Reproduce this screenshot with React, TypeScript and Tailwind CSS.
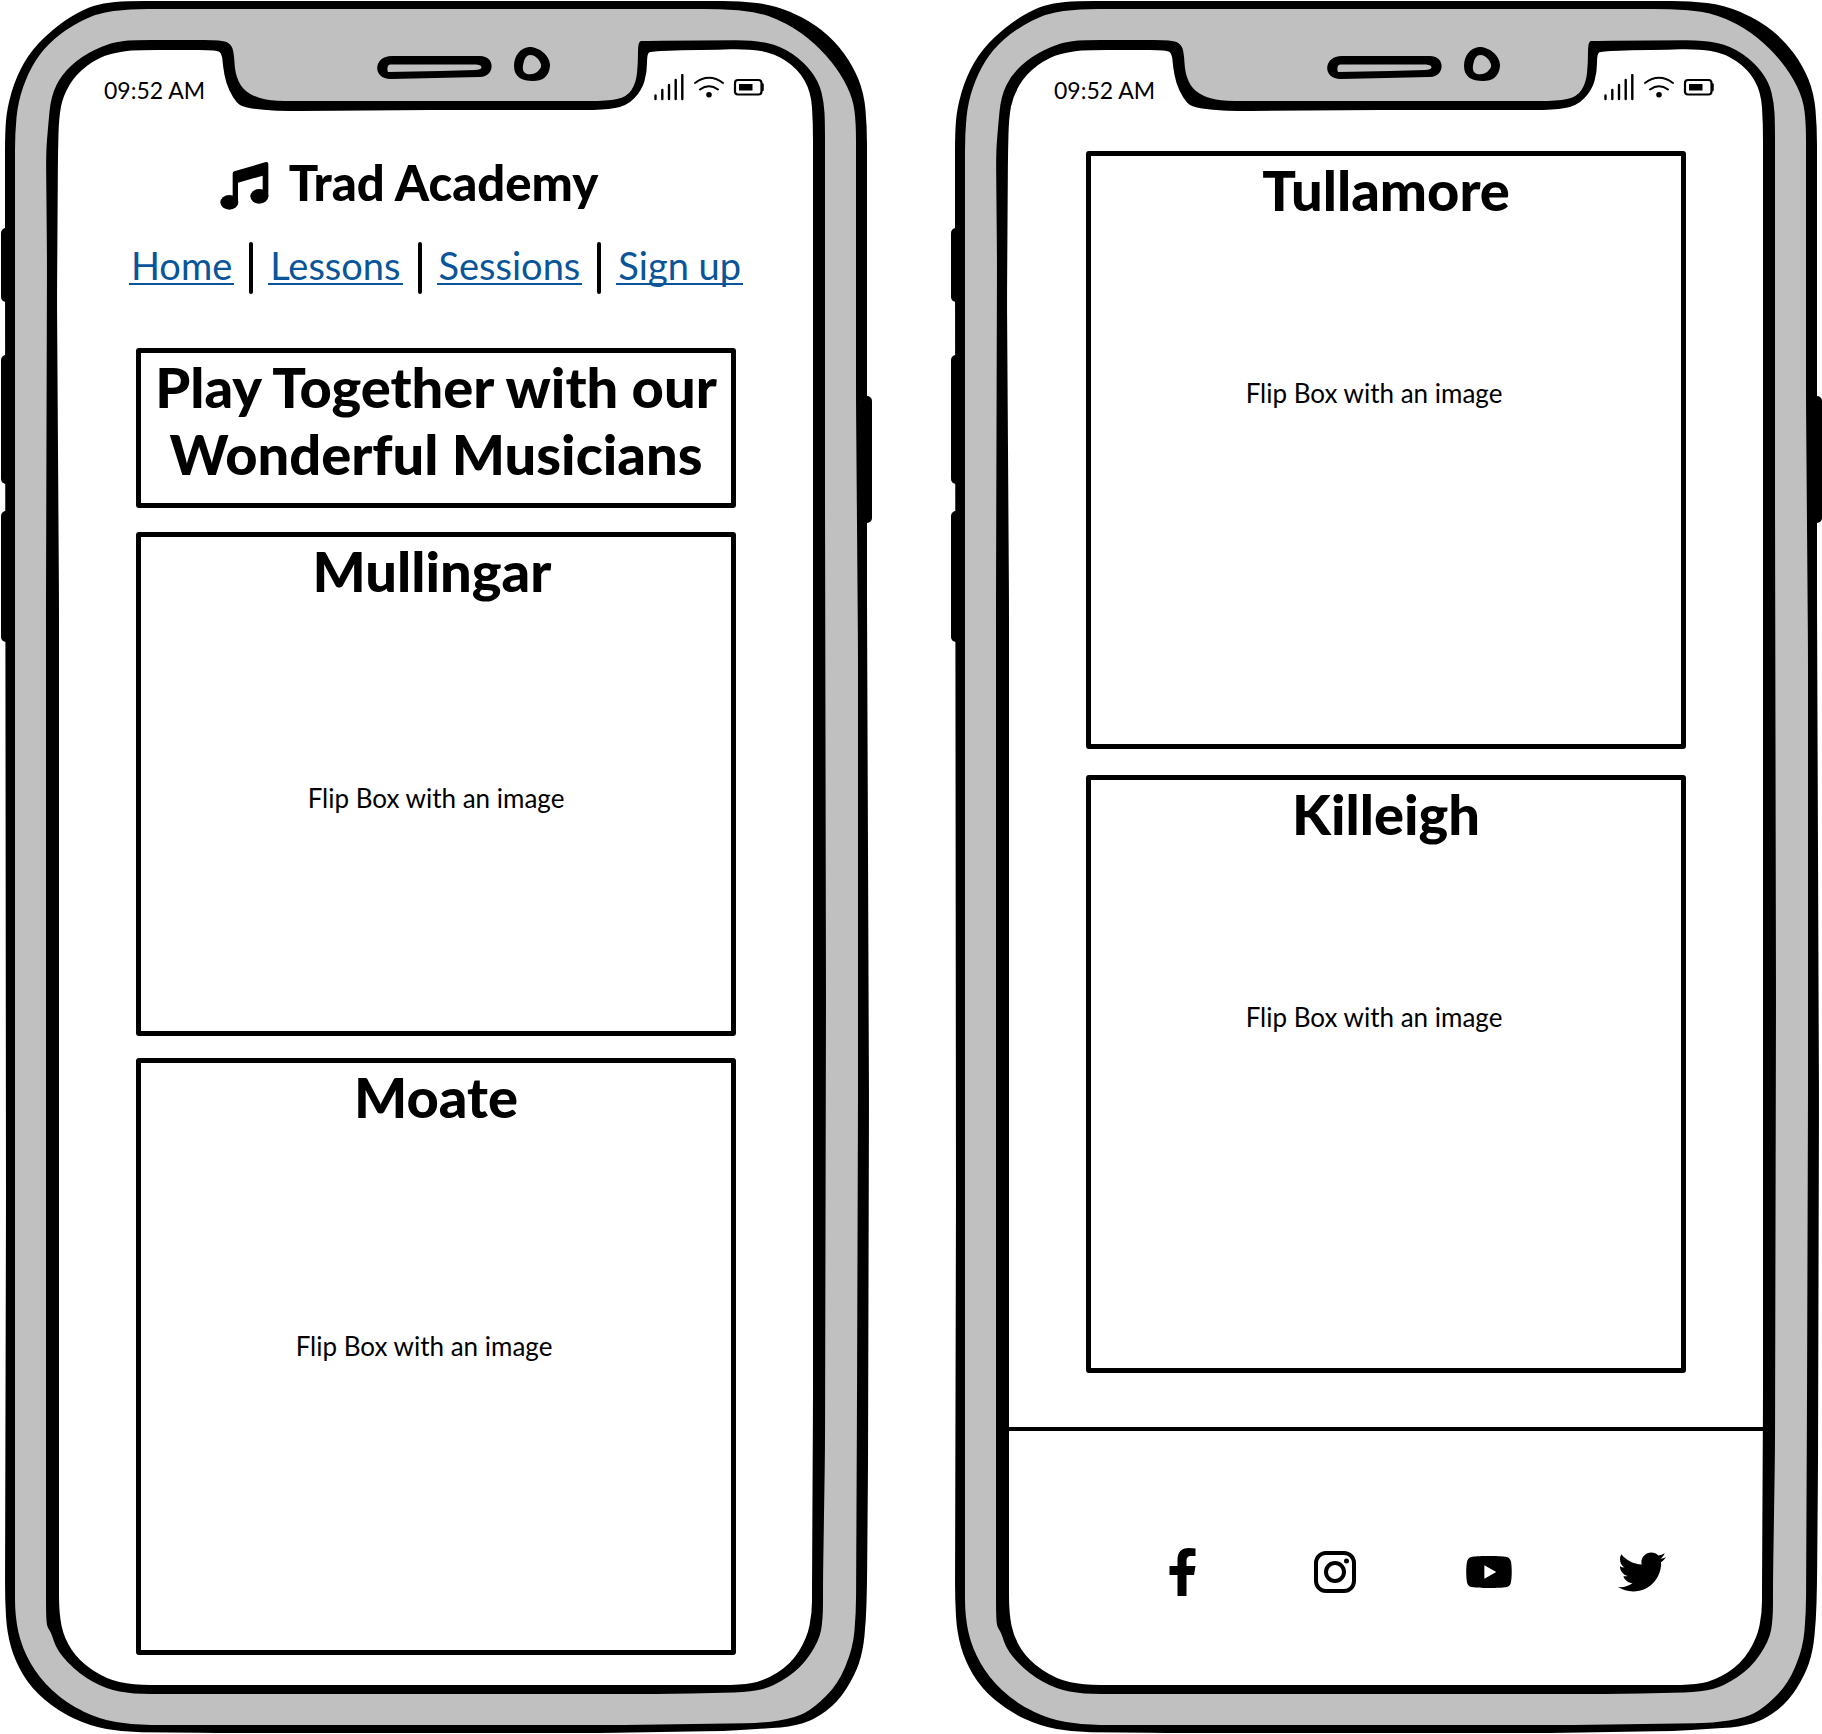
import type { ReactNode } from "react";
import { FaTwitter, FaYoutube } from "react-icons/fa";

type Point = [number, number];

// Point on the edge a-b, at most 18 units away from a and never past the middle.
function near(a: Point, b: Point): string {
  const length = Math.hypot(b[0] - a[0], b[1] - a[1]);
  const t = Math.min(0.5, 18 / length);
  return `${a[0] + (b[0] - a[0]) * t} ${a[1] + (b[1] - a[1]) * t}`;
}

// Closed outline whose corners are rounded off.
function outline(points: Point[]): string {
  const n = points.length;
  const parts = points.map((p, i) => {
    const previous = points[(i + n - 1) % n];
    const next = points[(i + 1) % n];
    return `${i === 0 ? "M" : "L"}${near(p, previous)}Q${p[0]} ${p[1]} ${near(p, next)}`;
  });
  return parts.join("") + "Z";
}

const OUTER: Point[] = [
  [5, 250], [5, 133], [7, 108], [16, 77], [32, 49], [59, 24], [84, 9], [103, 3], [127, 1], [400, 1], [740, 1],
  [774, 5], [809, 20], [835, 41], [853, 66], [864, 93], [867, 127], [867, 600], [869, 1100], [868, 1467], [867, 1587],
  [866, 1620], [863, 1651], [855, 1675], [838, 1702], [814, 1720], [790, 1727], [723, 1731], [598, 1733], [217, 1733],
  [123, 1732], [90, 1726], [58, 1711], [31, 1688], [15, 1661], [7, 1633], [5, 1600], [6, 1200],
];

const BODY: Point[] = [
  [15, 300], [15, 133], [18, 102], [28, 73], [43, 49], [66, 29], [97, 13], [130, 9], [400, 9], [720, 9],
  [760, 12], [794, 27], [821, 49], [841, 74], [853, 99], [856, 123], [856, 400], [858, 650], [858, 1100], [857, 1400],
  [856, 1613], [853, 1648], [838, 1684], [814, 1708], [795, 1718], [763, 1723], [623, 1725], [133, 1725],
  [99, 1719], [66, 1703], [39, 1678], [22, 1648], [15, 1617], [15, 1400],
];

const BEZEL: Point[] = [
  [47, 260], [46, 153], [48, 127], [51, 96], [62, 74], [82, 56], [107, 44], [123, 41], [133, 40], [180, 40], [222, 40],
  [231, 44], [234, 53], [235, 73], [242, 89], [257, 98], [275, 101], [440, 101], [607, 101], [627, 97], [636, 83],
  [638, 63], [638, 41], [644, 41], [753, 40], [781, 46], [804, 62], [819, 82], [824, 103], [825, 123], [825, 500],
  [826, 1000], [825, 1450], [823, 1580], [823, 1620], [819, 1641], [801, 1668], [774, 1686], [752, 1692], [673, 1694],
  [133, 1694], [106, 1689], [79, 1674], [57, 1651], [51, 1632], [47, 1627], [46, 1615], [46, 1400], [46, 600],
];

const SCREEN: Point[] = [
  [57, 300], [58, 150], [59, 117], [63, 96], [76, 74], [99, 57], [123, 51], [140, 50], [180, 50], [217, 50],
  [222, 54], [223, 67], [226, 83], [233, 98], [241, 107], [263, 110], [283, 111], [450, 110], [603, 110], [627, 106],
  [642, 90], [647, 72], [647, 54], [651, 51], [700, 50], [748, 49], [774, 53], [798, 69], [811, 92], [813, 123],
  [813, 600], [813, 1400], [812, 1590], [812, 1613], [807, 1638], [791, 1664], [764, 1681], [740, 1685], [133, 1685],
  [106, 1679], [79, 1661], [64, 1638], [59, 1613], [59, 1400], [59, 600],
];

function PhoneFrame() {
  return (
    <svg
      aria-hidden="true"
      className="absolute inset-0 h-full w-full"
      viewBox="0 0 872 1734"
      preserveAspectRatio="none"
    >
      <rect x="1" y="228" width="12" height="74" rx="5" />
      <rect x="1" y="355" width="12" height="129" rx="5" />
      <rect x="1" y="511" width="12" height="131" rx="5" />
      <rect x="857" y="396" width="15" height="127" rx="5" />
      <path d={outline(OUTER)} />
      <path d={outline(BODY)} fill="#c0c0c0" />
      <path d={outline(BEZEL)} />
      <path d={outline(SCREEN)} fill="#fff" />
      <path d="M392 56H480C496 56 495 77 480 77L391 79C372 79 373 56 392 56Z" />
      <path d="M390 64.500H476C484 65 483 70 475 70L440 71 388 72C387 70 387 65 390 64.500Z" fill="#c0c0c0" />
      <path d="M529 47C539 47 550 55 550 66C549 77 542 81 533 81C522 81 514 77 514 66C514 56 520 48 529 47Z" />
      <path d="M530 55C534 55 536 57 538 59C542 64 542 67 539 70C536 74 531 75 527 74C521 72 523 65 524 61C525 58 527 55 530 55Z" fill="#c0c0c0" />
    </svg>
  );
}

function StatusIcons() {
  return (
    <svg aria-hidden="true" className="h-7 w-[112px]" viewBox="653 74 112 28" fill="none" stroke="#000">
      <path
        d="M655.500 95.500V99M662.300 90V99M669 85V99M675.700 80V99M682.300 75V99"
        strokeWidth="2.400"
        strokeLinecap="round"
      />
      <path d="M695 83Q709 72.500 723 83M700 89.500Q709 83 718 89.500" strokeWidth="2" strokeLinecap="round" />
      <circle cx="709" cy="94.700" r="2.800" fill="#000" stroke="none" />
      <rect x="735" y="80" width="26.500" height="14.500" rx="3" strokeWidth="2.200" />
      <rect x="739" y="84" width="13.500" height="6.500" fill="#000" stroke="none" />
      <path d="M762.500 84.500V90" strokeWidth="2.500" strokeLinecap="round" />
    </svg>
  );
}

function StatusBar() {
  return (
    <div className="flex h-7 items-center justify-between">
      <span className="pt-1 text-[23px] leading-6">09:52 AM</span>
      <StatusIcons />
    </div>
  );
}

function MusicIcon() {
  return (
    <svg aria-hidden="true" className="mt-2 h-12 w-[49px]" viewBox="660 486 145 144">
      <path d="M697 520Q697 516 702 514L794 487Q804 484 804 492V590H787V527L713 548V608H697Z" />
      <ellipse cx="687" cy="607" rx="27" ry="22" />
      <ellipse cx="777" cy="589" rx="27" ry="22" />
    </svg>
  );
}

function FacebookIcon() {
  return (
    <svg aria-hidden="true" className="h-12 w-[27px]" viewBox="0 0 26 48">
      <path d="M8 48V27H0V18H8V12C8 4 12 0 19 0Q23 0 26 .5V8H22C18 8 17 10 17 13V18H26L24.500 27H17V48Z" />
    </svg>
  );
}

function InstagramIcon() {
  return (
    <svg aria-hidden="true" className="size-[42px]" viewBox="0 0 42 42" fill="none" stroke="#000">
      <rect x="2" y="2" width="38" height="38" rx="10" strokeWidth="4" />
      <circle cx="21" cy="21" r="9" strokeWidth="4" />
      <circle cx="32.500" cy="10" r="2.500" fill="#000" stroke="none" />
    </svg>
  );
}

function Phone({ children }: { children: ReactNode }) {
  return (
    <section className="relative pt-[74px]">
      <PhoneFrame />
      <div className="relative flex flex-col">
        <div className="pr-[107px] pl-[104px]">
          <StatusBar />
        </div>
        {children}
      </div>
    </section>
  );
}

interface FlipCardProps {
  title: string;
  className: string;
  heading?: string;
  caption: string;
}

function FlipCard({ title, className, heading = "", caption }: FlipCardProps) {
  return (
    <article className={`rounded-[3px] border-[5px] border-black text-center ${className}`}>
      <h2 className={`text-[56px] leading-[67px] font-black ${heading}`}>{title}</h2>
      <p className={`text-[26px] leading-8 ${caption}`}>Flip Box with an image</p>
    </article>
  );
}

const LINKS = ["Home", "Lessons", "Sessions", "Sign up"];

const SOCIALS = [
  { name: "Facebook", icon: <FacebookIcon /> },
  { name: "Instagram", icon: <InstagramIcon /> },
  { name: "YouTube", icon: <FaYoutube className="size-12" /> },
  { name: "Twitter", icon: <FaTwitter className="size-12" /> },
];

export default function App() {
  return (
    <main className="grid grid-cols-2 gap-[78px] bg-white font-['Lato',sans-serif] text-black">
      <Phone>
        <header>
          <div className="flex items-center justify-center gap-5 pt-[50px] pr-[54px]">
            <MusicIcon />
            <h1 className="text-[49px] leading-[60px] font-black">Trad Academy</h1>
          </div>
          <nav className="flex items-center justify-center pt-[30px]">
            {LINKS.map((link, i) => (
              <div key={link} className="flex items-center">
                {i > 0 && <span className="mx-[15px] h-[52px] w-1 rounded-full bg-black" />}
                <a href="#" className="border-b-2 border-[#0a5599] px-0.5 pb-1 text-[38px] leading-7 text-[#0a5599]">
                  {link}
                </a>
              </div>
            ))}
          </nav>
        </header>
        <div className="flex flex-col px-[136px] pt-[54px] pb-[79px]">
          <div className="rounded-[3px] border-[5px] border-black pb-4 text-center">
            <h2 className="text-[56px] leading-[67px] font-black">
              Play Together with our
              <br />
              Wonderful Musicians
            </h2>
          </div>
          <FlipCard title="Mullingar" className="mt-6 h-[504px]" heading="pr-2" caption="pt-[178px]" />
          <FlipCard title="Moate" className="mt-[22px] h-[597px]" caption="pt-[200px] pr-6" />
        </div>
      </Phone>
      <Phone>
        <div className="flex flex-col gap-[26px] px-[136px] pt-[49px]">
          <FlipCard title="Tullamore" className="h-[598px]" caption="pt-[154px] pr-6" />
          <FlipCard title="Killeigh" className="h-[598px]" caption="pt-[154px] pr-6" />
        </div>
        <footer className="mx-[58px] mt-[54px] border-t-4 border-black pt-[117px]">
          <ul className="flex items-center justify-between pr-[98px] pl-[150px]">
            {SOCIALS.map((social) => (
              <li key={social.name}>
                <a href="#" aria-label={social.name} className="flex size-12 items-center justify-center">
                  {social.icon}
                </a>
              </li>
            ))}
          </ul>
        </footer>
      </Phone>
    </main>
  );
}
